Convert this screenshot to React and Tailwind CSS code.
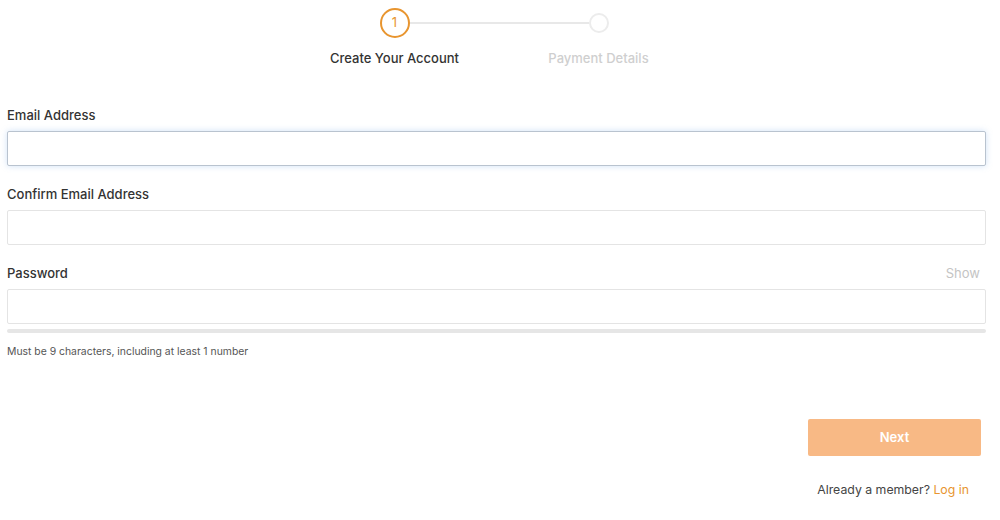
import React from 'react';

function Field({ label, right, focused }) {
  return (
    <div className="flex flex-col">
      <div className="flex items-end justify-between h-[20px]">
        <label className="text-[13px] font-medium text-[#333]">{label}</label>
        {right}
      </div>
      <input
        className={
          'mt-[5px] h-[35px] w-full rounded-[2px] border bg-white px-3 text-sm outline-none ' +
          (focused
            ? 'border-[#b9c3cf] shadow-[0_0_6px_rgba(120,170,230,0.35)]'
            : 'border-[#e4e4e4]')
        }
      />
    </div>
  );
}

export default function App() {
  return (
    <div className="min-h-[520px] w-full bg-white font-['Inter',sans-serif] text-[#333]">
      <div className="w-[979px] ml-[7px]">
        {/* Stepper */}
        <div className="flex justify-center pt-[8px]">
          <div className="relative grid w-[408px] grid-cols-2">
            <div className="absolute left-[117px] top-[14px] h-[2px] w-[179px] bg-[#e8e8e8]" />
            <div className="flex flex-col items-center">
              <div className="relative z-10 flex h-[30px] w-[30px] items-center justify-center rounded-full border-2 border-[#e8952f] bg-white text-[13px] text-[#e8952f]">
                1
              </div>
              <span className="mt-[11px] text-[13px] font-medium text-[#333]">Create Your Account</span>
            </div>
            <div className="flex flex-col items-center">
              <div className="relative z-10 mt-[5px] h-[20px] w-[20px] rounded-full border-2 border-[#ececec] bg-white" />
              <span className="mt-[16px] text-[13px] font-medium text-[#cfcfcf]">Payment Details</span>
            </div>
          </div>
        </div>

        {/* Form */}
        <div className="mt-[37px] flex flex-col gap-[19px]">
          <Field label="Email Address" focused />
          <Field label="Confirm Email Address" />
          <div>
            <Field
              label="Password"
              right={<span className="mr-[6px] text-[13px] text-[#c4c4c4]">Show</span>}
            />
            <div className="mt-[5px] h-[4px] w-full rounded-full bg-[#e6e6e6]" />
            <p className="mt-[11px] text-[10.4px] text-[#555]">Must be 9 characters, including at least 1 number</p>
          </div>
        </div>

        <div className="mt-[60px] flex flex-col items-end">
          <button className="mr-[5px] h-[37px] w-[173px] rounded-[2px] bg-[#f8b985] text-[13px] font-semibold text-white">
            Next
          </button>
          <p className="mr-[17px] mt-[25px] text-[12.3px] text-[#444]">
            Already a member? <span className="text-[#e8952f]">Log in</span>
          </p>
        </div>
      </div>
    </div>
  );
}
